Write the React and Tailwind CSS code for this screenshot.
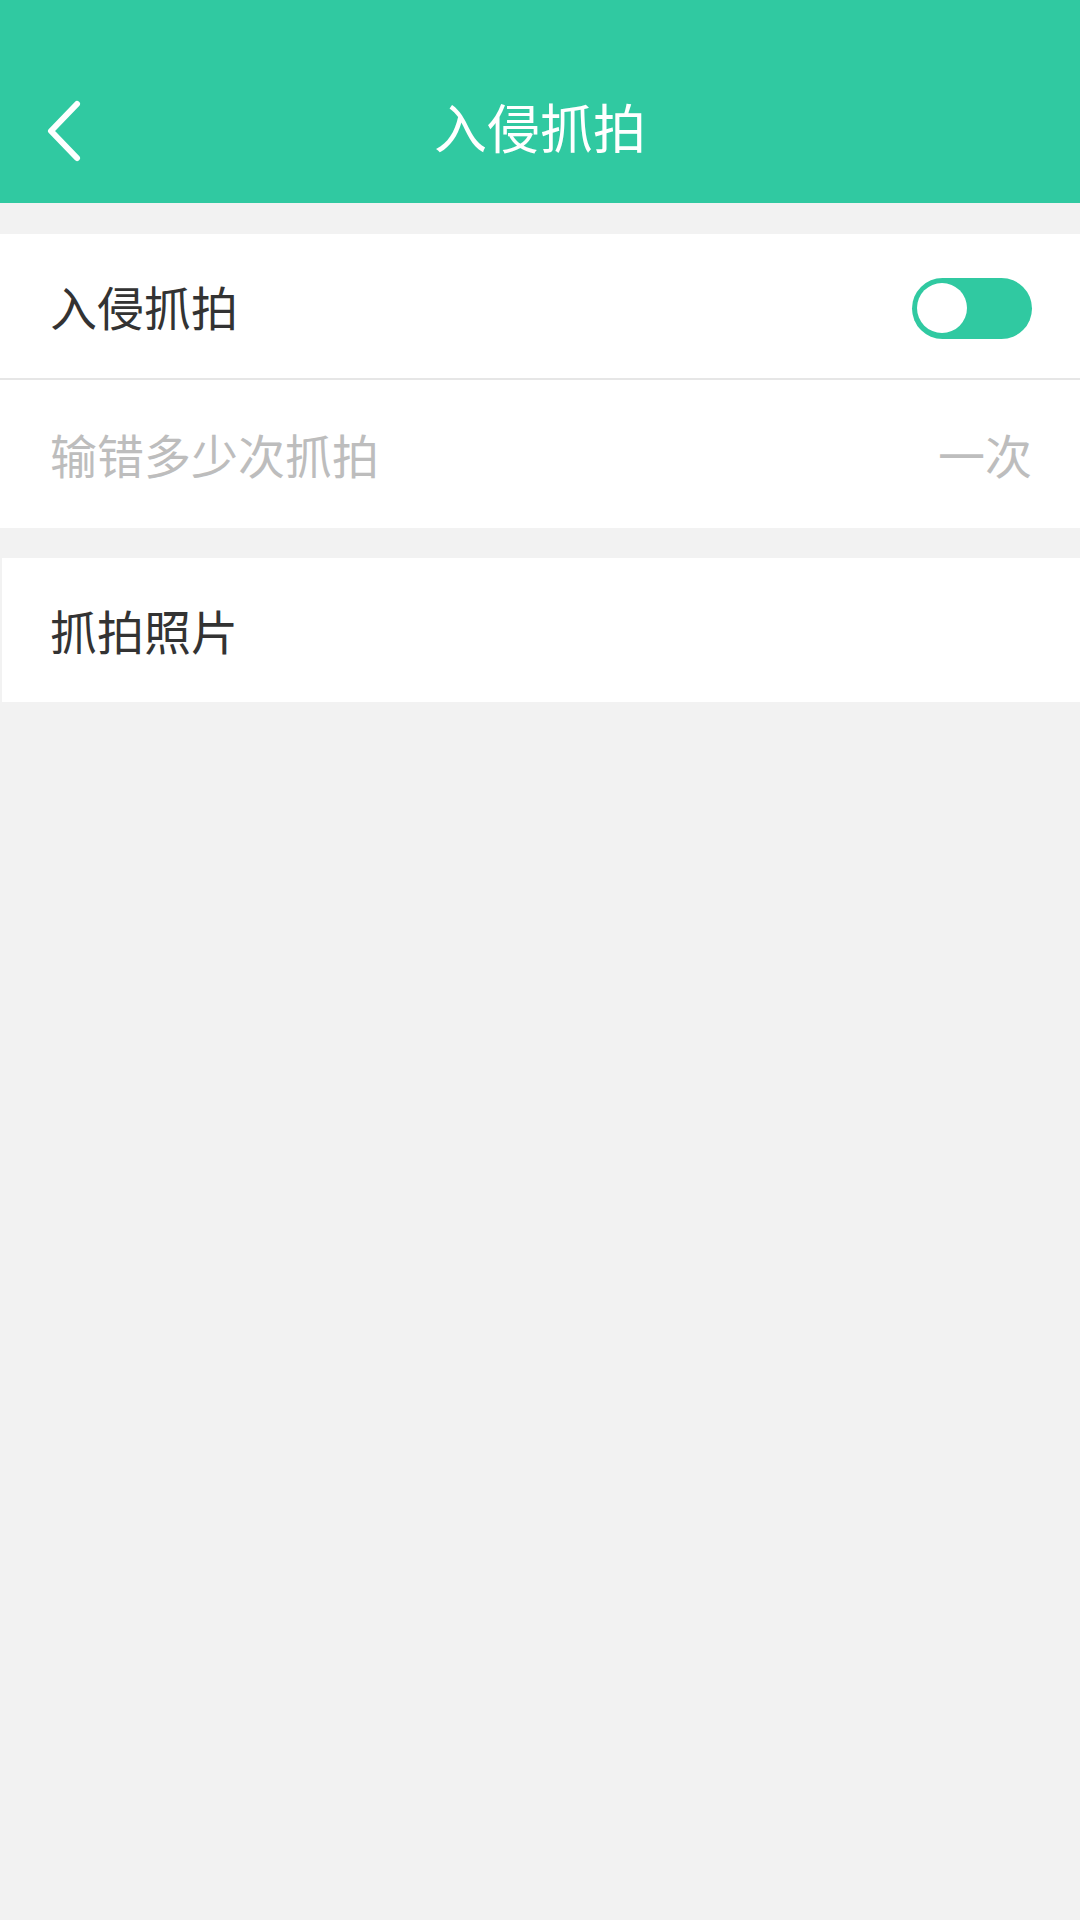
export default function App() {
    return (
        <div
            className="w-[1080px] h-[1920px] bg-[#f2f2f2] flex flex-col"
            style={{ fontFamily: '"Noto Sans CJK SC", "Noto Sans", sans-serif' }}
        >
            {/* header */}
            <div className="h-[203px] bg-[#30c9a1] flex items-end shrink-0">
                <div className="relative w-full h-[140px] flex items-center justify-center">
                    <button className="absolute left-[44px] top-[36px] w-[40px] h-[64px] flex items-center justify-center">
                        <svg width="40" height="64" viewBox="0 0 40 64" fill="none">
                            <path
                                d="M33 5 L7 32 L33 59"
                                stroke="white"
                                strokeWidth="6"
                                strokeLinecap="round"
                                strokeLinejoin="round"
                            />
                        </svg>
                    </button>
                    <h1 className="text-white text-[53px] leading-none -mt-[14px]">入侵抓拍</h1>
                </div>
            </div>

            <div className="mt-[31px] bg-white">
                <div className="h-[146px] pl-[50px] pr-[48px] flex items-center justify-between border-b-2 border-[#e6e6e6]">
                    <span className="text-[47px] text-[#333333]">入侵抓拍</span>
                    <div className="w-[120px] h-[61px] mt-[4px] rounded-full bg-[#30c9a1] p-[5px] flex items-center">
                        <div className="w-[50px] h-[50px] rounded-full bg-white" />
                    </div>
                </div>
                <div className="h-[148px] pl-[50px] pr-[48px] flex items-center justify-between">
                    <span className="text-[47px] text-[#bdbdbd]">输错多少次抓拍</span>
                    <span className="text-[47px] text-[#bdbdbd]">一次</span>
                </div>
            </div>

            <div className="mt-[30px] ml-[2px] h-[144px] bg-white px-[48px] flex items-center">
                <span className="text-[47px] text-[#333333]">抓拍照片</span>
            </div>
        </div>
    );
}
